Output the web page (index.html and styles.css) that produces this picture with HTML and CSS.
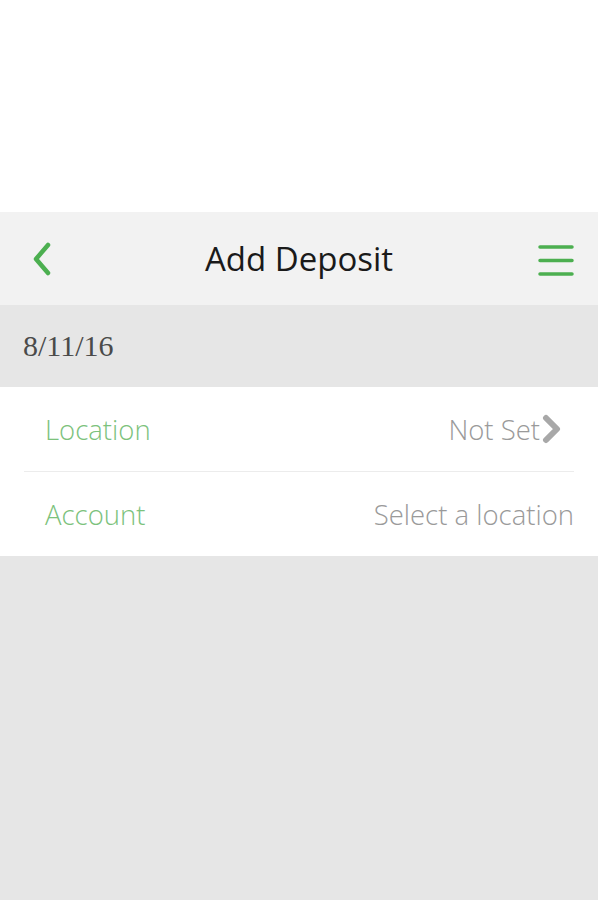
FILE: index.html
```html
<html>
<head>
<link rel="stylesheet" href="styles.css">
</head>
<body>
<div class="screen">
  <div class="topspace"></div>
  <div class="header">
    <svg class="back" width="24" height="36" viewBox="0 0 24 36"><path d="M18 4 L6 18 L18 32" fill="none" stroke="#4caf50" stroke-width="4.5" stroke-linecap="round" stroke-linejoin="round"/></svg>
    <div class="title">Add Deposit</div>
    <svg class="menu" width="36" height="32" viewBox="0 0 36 32"><path d="M2 3 H34 M2 16.5 H34 M2 30 H34" stroke="#4caf50" stroke-width="3.5" stroke-linecap="round"/></svg>
  </div>
  <div class="datebar">8/11/16</div>
  <div class="list">
    <div class="row">
      <span class="label">Location</span>
      <span class="value">Not Set<svg class="chev" width="24" height="30" viewBox="0 0 24 30"><path d="M6 4 L17 15 L6 26" fill="none" stroke="#a8a8a8" stroke-width="6" stroke-linecap="round" stroke-linejoin="round"/></svg></span>
    </div>
    <div class="row">
      <span class="label">Account</span>
      <span class="value">Select a location</span>
    </div>
  </div>
  <div class="rest"></div>
</div>
</body>
</html>
```

FILE: styles.css
```css
body {
  margin: 0;
  background: #fff;
  font-family: "Open Sans", "Noto Sans", sans-serif;
}

.screen {
  width: 598px;
  display: flex;
  flex-direction: column;
  min-height: 900px;
}

.topspace {
  height: 212px;
  background: #fff;
}

.header {
  height: 93px;
  background: #f2f2f2;
  display: flex;
  align-items: center;
  justify-content: space-between;
  padding: 0 24px 0 30px;
}

.title {
  font-size: 33px;
  color: #1a1a1a;
  margin-left: 6px;
}

.menu {
  margin-top: 2px;
}

.datebar {
  height: 82px;
  background: #e6e6e6;
  display: flex;
  align-items: center;
  padding-left: 23px;
  font-family: "Liberation Serif", serif;
  font-size: 30px;
  color: #4a4a4a;
}

.list {
  background: #fff;
  padding: 0 24px;
}

.row {
  height: 84px;
  display: flex;
  align-items: center;
  justify-content: space-between;
  padding-left: 21px;
  font-size: 27.5px;
  font-weight: 300;
}

.row + .row {
  border-top: 1px solid #ececec;
}

.label {
  color: #7cc27c;
}

.value {
  color: #9a9a9a;
  display: flex;
  align-items: center;
}

.chev {
  margin-right: 10px;
}

.rest {
  flex: 1;
  background: #e6e6e6;
}
```
